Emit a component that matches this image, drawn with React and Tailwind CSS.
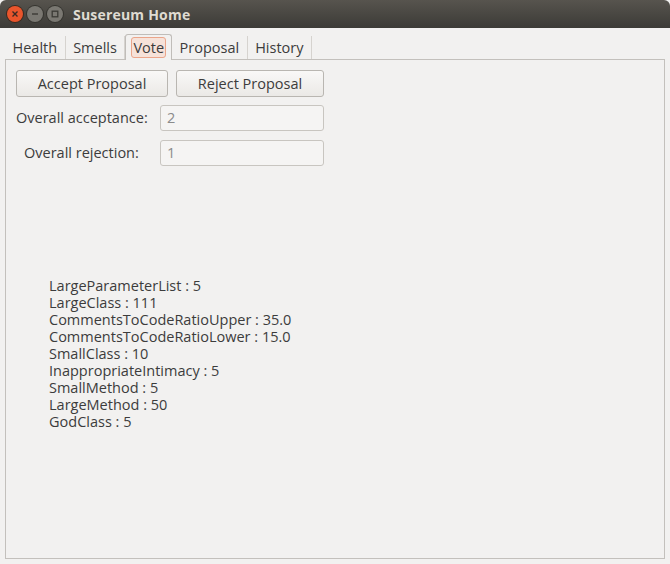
import React from 'react';

const SMELLS = [
  'LargeParameterList : 5',
  'LargeClass : 111',
  'CommentsToCodeRatioUpper : 35.0',
  'CommentsToCodeRatioLower : 15.0',
  'SmallClass : 10',
  'InappropriateIntimacy : 5',
  'SmallMethod : 5',
  'LargeMethod : 50',
  'GodClass : 5',
];

const TABS = ['Health', 'Smells', 'Vote', 'Proposal', 'History'];

function WinButton({ kind }) {
  if (kind === 'close') {
    return (
      <span className="flex h-[16px] w-[16px] items-center justify-center rounded-full bg-[#e9552c] ring-1 ring-[#3a2a20]">
        <svg width="8" height="8" viewBox="0 0 8 8"><path d="M1.5 1.5l5 5M6.5 1.5l-5 5" stroke="#3b2a24" strokeWidth="1.4" /></svg>
      </span>
    );
  }
  return (
    <span className="flex h-[16px] w-[16px] items-center justify-center rounded-full bg-[#7a7872] ring-1 ring-[#35342f]">
      {kind === 'min'
        ? <svg width="8" height="8" viewBox="0 0 8 8"><path d="M1 4h6" stroke="#3b3a35" strokeWidth="1.4" /></svg>
        : <svg width="8" height="8" viewBox="0 0 8 8"><rect x="1.2" y="1.2" width="5.6" height="5.6" fill="none" stroke="#3b3a35" strokeWidth="1.3" /></svg>}
    </span>
  );
}

function Field({ label, value, pad }) {
  return (
    <div className="flex h-[26px] items-center">
      <div className={'w-[144px] whitespace-nowrap text-[14.5px] text-[#3c3c3c] ' + pad}>{label}</div>
      <div className="flex h-[26px] w-[164px] items-center rounded-[3px] border border-[#c8c5c0] bg-[#f5f4f3] pl-[6px] text-[14.5px] text-[#8b8b8b]">
        {value}
      </div>
    </div>
  );
}

export default function App() {
  return (
    <div className="flex h-[564px] w-[670px] flex-col overflow-hidden bg-[#f2f1f0] font-['Open_Sans',sans-serif] text-[#3c3c3c]">
      <div className="flex h-[28px] shrink-0 items-center rounded-t-[6px] bg-gradient-to-b from-[#57544e] to-[#3c3b37] pl-[7px]">
        <div className="flex gap-[4px]">
          <WinButton kind="close" />
          <WinButton kind="min" />
          <WinButton kind="max" />
        </div>
        <div className="ml-[10px] text-[14px] font-bold tracking-[0.2px] text-[#dfdbd2]">Susereum Home</div>
      </div>

      <div className="flex h-[31px] shrink-0 items-end pl-[5px] pt-[6px]">
        {TABS.map((t) => t === 'Vote' ? (
          <div key={t} className="relative z-10 -mb-px flex h-[26px] items-center rounded-t-[3px] border border-b-0 border-[#c0bdb9] bg-[#f2f1f0] px-[5px]">
            <span className="rounded-[3px] border border-[#eba58a] bg-[#f6e2d9] px-[1px] text-[14.5px] leading-[19px]">{t}</span>
          </div>
        ) : (
          <div key={t} className="flex h-[23px] items-center border-r border-[#d6d3cf] px-[7.5px] text-[14.5px]">{t}</div>
        ))}
      </div>

      <div className="mx-[5px] mb-[5px] flex flex-1 flex-col border border-[#c3c0bc] px-[10px] pt-[10px]">
        <div className="flex gap-[8px]">
          <button className="h-[27px] w-[152px] rounded-[3px] border border-[#b9b6b1] bg-gradient-to-b from-[#f9f8f7] to-[#ebe9e6] text-[14.5px] text-[#3c3c3c]">Accept Proposal</button>
          <button className="h-[27px] w-[148px] rounded-[3px] border border-[#b9b6b1] bg-gradient-to-b from-[#f9f8f7] to-[#ebe9e6] text-[14.5px] text-[#3c3c3c]">Reject Proposal</button>
        </div>
        <div className="mt-[8px] flex flex-col gap-[9px]">
          <Field label="Overall acceptance:" value="2" pad="pl-0" />
          <Field label="Overall rejection:" value="1" pad="pl-[8px]" />
        </div>
        <div className="mt-[111px] pl-[33px] text-[14.5px] leading-[17px]">
          {SMELLS.map((s) => <div key={s}>{s}</div>)}
        </div>
      </div>
    </div>
  );
}
